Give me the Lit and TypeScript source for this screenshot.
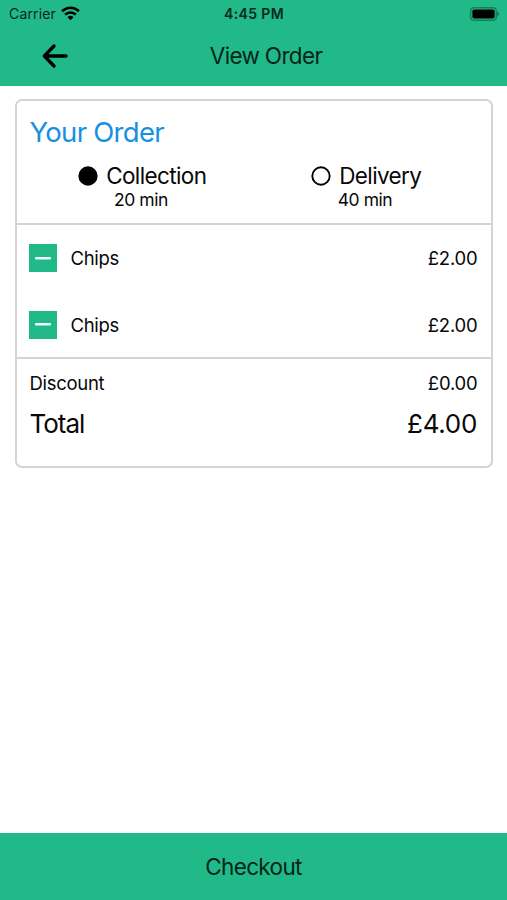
import { LitElement, html, css } from "lit";
import { customElement, property } from "lit/decorators.js";

@customElement("status-bar")
class StatusBar extends LitElement {
  static styles = css`
    :host { display: grid; grid-template-columns: 1fr auto 1fr; align-items: center; height: 27px; padding: 0 7px 0 9px; color: #06281d; }
    .left { display: flex; align-items: center; gap: 5.5px; font-size: 14px; line-height: 27px; letter-spacing: 0.15px; }
    .time { font-size: 14px; font-weight: 600; line-height: 27px; letter-spacing: 0.35px; margin-right: 1px; }
    .battery { justify-self: end; }
    svg { display: block; }
  `;
  render() {
    return html`
      <div class="left">
        <span>Carrier</span>
        <svg width="19" height="15" viewBox="0 0 19 15" fill="none" stroke="#000" stroke-width="2.6">
          <path d="M1.1 5.2a12 12 0 0 1 16.8 0" />
          <path d="M4.1 8.6a7.8 7.8 0 0 1 10.8 0" />
          <path d="M9.5 14.2 6.5 11.2a4.3 4.3 0 0 1 6 0z" fill="#000" stroke="none" />
        </svg>
      </div>
      <span class="time">4:45 PM</span>
      <svg class="battery" width="30" height="14" viewBox="0 0 30 14">
        <rect x=".7" y=".7" width="25.6" height="12.6" rx="3.4" fill="none" stroke="#128058" stroke-width="1.4" />
        <rect x="2.4" y="2.4" width="22.2" height="9.2" rx="1.8" />
        <path d="M27.4 4.8c2 .6 2 3.8 0 4.4z" fill="#0d6b49" />
      </svg>
    `;
  }
}

@customElement("order-option")
class OrderOption extends LitElement {
  @property() label = "";
  @property() time = "";
  @property({ type: Boolean }) selected = false;
  static styles = css`
    :host { display: flex; flex-direction: column; align-items: center; }
    .row { display: flex; align-items: center; gap: 8.5px; font-size: 22.5px; line-height: 28px; letter-spacing: -0.62px; }
    .time { font-size: 17.5px; line-height: 20px; letter-spacing: -0.45px; margin-right: 2px; }
    svg { display: block; }
  `;
  render() {
    return html`
      <div class="row">
        <svg width="20" height="20" viewBox="0 0 20 20">
          <circle cx="10" cy="10" r="8.7" fill=${this.selected ? "#000" : "none"} stroke="#000" stroke-width="1.9" />
        </svg>
        <span>${this.label}</span>
      </div>
      <span class="time">${this.time}</span>
    `;
  }
}

const items = [
  { name: "Chips", price: "£2.00" },
  { name: "Chips", price: "£2.00" },
];

@customElement("app-root")
class AppRoot extends LitElement {
  static styles = css`
    :host { display: flex; flex-direction: column; height: 900px; background: #fff; color: #080808; font-family: Inter, "Liberation Sans", sans-serif; box-sizing: border-box; }
    .header { height: 86px; background: #22b988; flex: none; }
    .nav { display: grid; grid-template-columns: 1fr auto 1fr; align-items: center; height: 58px; padding: 0 0 0 41px; margin-right: 17px; }
    .title { font-size: 22.5px; line-height: 28px; letter-spacing: -0.67px; color: #04251a; margin-left: 1px; }
    .back { display: block; }
    .card { margin: 13px 14px 0 15px; height: 369px; box-sizing: border-box; border: 2px solid #d4d4d4; border-radius: 7px; display: flex; flex-direction: column; }
    .top { height: 124px; box-sizing: border-box; border-bottom: 2px solid #d4d4d4; padding: 13px 13px 0; }
    .heading { font-size: 27.5px; line-height: 36px; color: #1890e0; margin: 0 0 0 -0.5px; font-weight: 400; letter-spacing: -0.72px; }
    .options { display: grid; grid-template-columns: 1fr 1fr; margin-top: 12px; }
    .items { height: 134px; box-sizing: border-box; border-bottom: 2px solid #d4d4d4; }
    .item { display: flex; align-items: center; height: 66.5px; padding: 0 13px 0 12px; font-size: 18.5px; letter-spacing: -0.3px; }
    .minus { width: 28px; height: 28px; border: 0; padding: 0; background: #22b988; margin-right: 13.5px; display: grid; place-items: center; }
    .minus svg { display: block; }
    .price { margin-left: auto; letter-spacing: -0.2px; margin-right: 0.5px; }
    .sum { display: flex; justify-content: space-between; padding: 0 13.5px 0 12.5px; font-size: 18.5px; line-height: 24px; letter-spacing: -0.2px; }
    .discount { margin-top: 12px; }
    .discount .label { letter-spacing: -0.3px; }
    .total { font-size: 26px; line-height: 34px; margin-top: 12px; letter-spacing: -0.3px; padding-right: 14px; }
    .total .label { letter-spacing: -1px; }
    .checkout { margin-top: auto; height: 67px; border: 0; background: #22b988; font: inherit; font-size: 22.5px; color: #04251a; letter-spacing: -0.65px; }
  `;
  render() {
    return html`
      <div class="header">
        <status-bar></status-bar>
        <div class="nav">
          <svg class="back" width="28" height="26" viewBox="0 0 28 26" fill="none" stroke="#000" stroke-width="3.4" stroke-linecap="round" stroke-linejoin="round">
            <path d="M13 3 3.4 13 13 23M4 13H25" />
          </svg>
          <span class="title">View Order</span>
        </div>
      </div>
      <div class="card">
        <div class="top">
          <h1 class="heading">Your Order</h1>
          <div class="options">
            <order-option label="Collection" time="20 min" selected></order-option>
            <order-option label="Delivery" time="40 min"></order-option>
          </div>
        </div>
        <div class="items">
          ${items.map(
            (i) => html`<div class="item">
              <button class="minus" aria-label="Remove">
                <svg width="16" height="3" viewBox="0 0 16 3"><rect width="16" height="2.6" rx="1" fill="#f2fffa" /></svg>
              </button>
              <span>${i.name}</span><span class="price">${i.price}</span>
            </div>`
          )}
        </div>
        <div class="sum discount"><span class="label">Discount</span><span>£0.00</span></div>
        <div class="sum total"><span class="label">Total</span><span>£4.00</span></div>
      </div>
      <button class="checkout">Checkout</button>
    `;
  }
}
